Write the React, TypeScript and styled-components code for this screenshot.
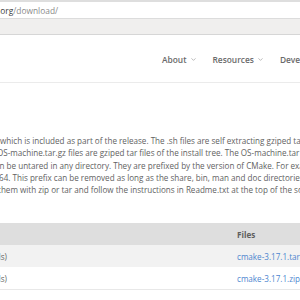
import * as React from "react";
import styled, { createGlobalStyle } from "styled-components";
import { ChevronDown } from "lucide-react";

const GlobalStyle = createGlobalStyle`
  html, body {
    margin: 0;
    padding: 0;
    width: 300px;
    height: 300px;
    overflow: hidden;
    background: #ffffff;
    font-family: "Open Sans", "Noto Sans", sans-serif;
  }
`;

const Browser = styled.div`
  width: 300px;
  height: 300px;
  overflow: hidden;
  display: flex;
  flex-direction: column;
`;

const AddressBar = styled.div`
  height: 16px;
  border-top: 2px solid #dedede;
  border-bottom: 1px solid #dcdcdc;
  display: flex;
  align-items: center;
  font-size: 8.4px;
  white-space: nowrap;
`;

const Host = styled.span`
  color: #3c3c3c;
  margin-left: -2px;
`;

const Path = styled.span`
  color: #8a8a8a;
`;

const Toolbar = styled.div`
  height: 15px;
  background: #f0efee;
  border-bottom: 1px solid #d6d6d6;
`;

const Header = styled.header`
  height: 46px;
  border-bottom: 1px solid #ebebeb;
  display: flex;
  align-items: center;
  padding-top: 1px;
  padding-left: 162px;
`;

const Nav = styled.nav`
  display: flex;
  align-items: center;
  gap: 16px;
  white-space: nowrap;
`;

const NavItem = styled.span`
  display: flex;
  align-items: center;
  gap: 3px;
  font-size: 8.4px;
  font-weight: 600;
  color: #6a6a6a;
`;

const Intro = styled.section`
  margin-top: 52px;
  display: flex;
  flex-direction: column;
  font-size: 8.1px;
  line-height: 12.3px;
  color: #626262;
  white-space: nowrap;
`;

const Line = styled.div<{ $shift: number }>`
  margin-left: ${(p) => p.$shift}px;
`;

const Table = styled.div`
  margin-top: 27px;
  display: flex;
  flex-direction: column;
  font-size: 8.1px;
  white-space: nowrap;
  border-bottom: 1px solid #e8e8e8;
`;

const Row = styled.div<{ $bg: string }>`
  height: 22px;
  display: grid;
  grid-template-columns: 237px 1fr;
  align-items: center;
  background: ${(p) => p.$bg};
  color: #666666;
`;

const HeadCell = styled.span`
  font-weight: 700;
  color: #5e5e5e;
`;

const Platform = styled.span`
  margin-left: -16px;
`;

const FileLink = styled.a`
  color: #4d86cf;
  text-decoration: none;
`;

const navItems = ["About", "Resources", "Developer Resources"];

const lines: [number, string][] = [
  [0, "which is included as part of the release. The .sh files are self extracting gziped tar"],
  [-3, "OS-machine.tar.gz files are gziped tar files of the install tree. The OS-machine.tar"],
  [-5, "an be untared in any directory. They are prefixed by the version of CMake. For exa"],
  [-1, "64. This prefix can be removed as long as the share, bin, man and doc directories"],
  [-2, "them with zip or tar and follow the instructions in Readme.txt at the top of the source"],
];

const files = [
  { bg: "#f2f2f2", name: "cmake-3.17.1.tar.gz" },
  { bg: "#ffffff", name: "cmake-3.17.1.zip" },
];

const App = () => {
  return (
    <Browser>
      <GlobalStyle />
      <AddressBar>
        <Host>.org</Host>
        <Path>/download/</Path>
      </AddressBar>
      <Toolbar />
      <Header>
        <Nav>
          {navItems.map((item) => (
            <NavItem key={item}>
              {item}
              <ChevronDown size={7} strokeWidth={2} color="#8c8c8c" />
            </NavItem>
          ))}
        </Nav>
      </Header>
      <Intro>
        {lines.map(([shift, text]) => (
          <Line key={text} $shift={shift}>
            {text}
          </Line>
        ))}
      </Intro>
      <Table>
        <Row $bg="#dedede">
          <span />
          <HeadCell>Files</HeadCell>
        </Row>
        {files.map((f) => (
          <Row key={f.name} $bg={f.bg}>
            <Platform>feeds)</Platform>
            <FileLink href="#">{f.name}</FileLink>
          </Row>
        ))}
      </Table>
    </Browser>
  );
};

export default App;
